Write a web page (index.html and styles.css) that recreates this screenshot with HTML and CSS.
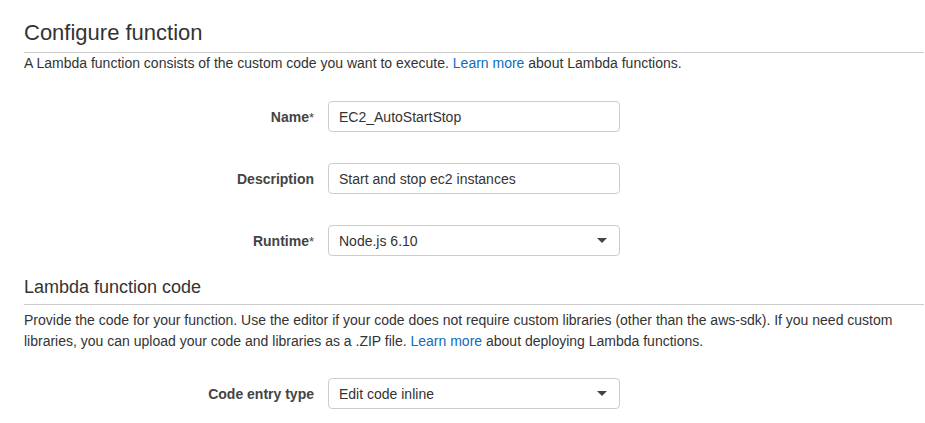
FILE: index.html
```html
<!DOCTYPE html>
<html>
<head>
<meta charset="utf-8">
<link rel="stylesheet" href="styles.css">
</head>
<body>
<div class="page">
  <section class="section">
    <h2 class="title">Configure function</h2>
    <p class="desc">A Lambda function consists of the custom code you want to execute. <a class="link" href="#">Learn more</a> about Lambda functions.</p>
    <div class="form">
      <div class="row">
        <label class="label">Name<span class="req">*</span></label>
        <div class="field"><span class="value">EC2_AutoStartStop</span></div>
      </div>
      <div class="row">
        <label class="label">Description</label>
        <div class="field"><span class="value">Start and stop ec2 instances</span></div>
      </div>
      <div class="row">
        <label class="label">Runtime<span class="req">*</span></label>
        <div class="field select"><span class="value">Node.js 6.10</span><span class="caret"></span></div>
      </div>
    </div>
  </section>
  <section class="section second">
    <h3 class="subtitle">Lambda function code</h3>
    <p class="desc wide">Provide the code for your function. Use the editor if your code does not require custom libraries (other than the aws-sdk). If you need custom libraries, you can upload your code and libraries as a .ZIP file. <a class="link" href="#">Learn more</a> about deploying Lambda functions.</p>
    <div class="form form2">
      <div class="row">
        <label class="label">Code entry type</label>
        <div class="field select"><span class="value">Edit code inline</span><span class="caret"></span></div>
      </div>
    </div>
  </section>
</div>
</body>
</html>
```
FILE: styles.css
```css
html, body {
  margin: 0;
  padding: 0;
  background: #ffffff;
}
body {
  font-family: "Liberation Sans", Arial, sans-serif;
  color: #333333;
}
.page {
  padding: 20px 1px 0 24px;
}
.title {
  margin: 0;
  font-size: 22px;
  line-height: 25px;
  font-weight: normal;
  color: #333333;
  padding-bottom: 7px;
  border-bottom: 1px solid #cccccc;
}
.subtitle {
  margin: 0;
  font-size: 18px;
  line-height: 21px;
  font-weight: normal;
  color: #333333;
  padding-bottom: 6px;
  border-bottom: 1px solid #cccccc;
}
.desc {
  margin: 0;
  font-size: 14px;
  line-height: 20px;
  color: #333333;
}
.desc.wide {
  margin-top: 5px;
  line-height: 21px;
}
.link {
  color: #0f6bbd;
  text-decoration: none;
}
.form {
  display: flex;
  flex-direction: column;
  gap: 31px;
  margin-top: 28px;
}
.form2 {
  margin-top: 26px;
}
.second {
  margin-top: 21px;
}
.row {
  display: flex;
  align-items: center;
  gap: 14px;
}
.label {
  width: 290px;
  text-align: right;
  font-size: 14px;
  font-weight: bold;
  color: #444444;
}
.req {
  font-weight: normal;
  font-size: 13px;
}
.field {
  height: 29px;
  border: 1px solid #cccccc;
  border-radius: 4px;
  display: flex;
  align-items: center;
  padding-left: 10px;
  box-sizing: content-box;
  width: 280px;
  font-size: 14px;
  color: #333333;
}
.select {
  justify-content: space-between;
}
.value {
  flex: 1;
}
.caret {
  width: 0;
  height: 0;
  border-left: 5px solid transparent;
  border-right: 5px solid transparent;
  border-top: 5px solid #444444;
  margin-right: 12px;
}
```
